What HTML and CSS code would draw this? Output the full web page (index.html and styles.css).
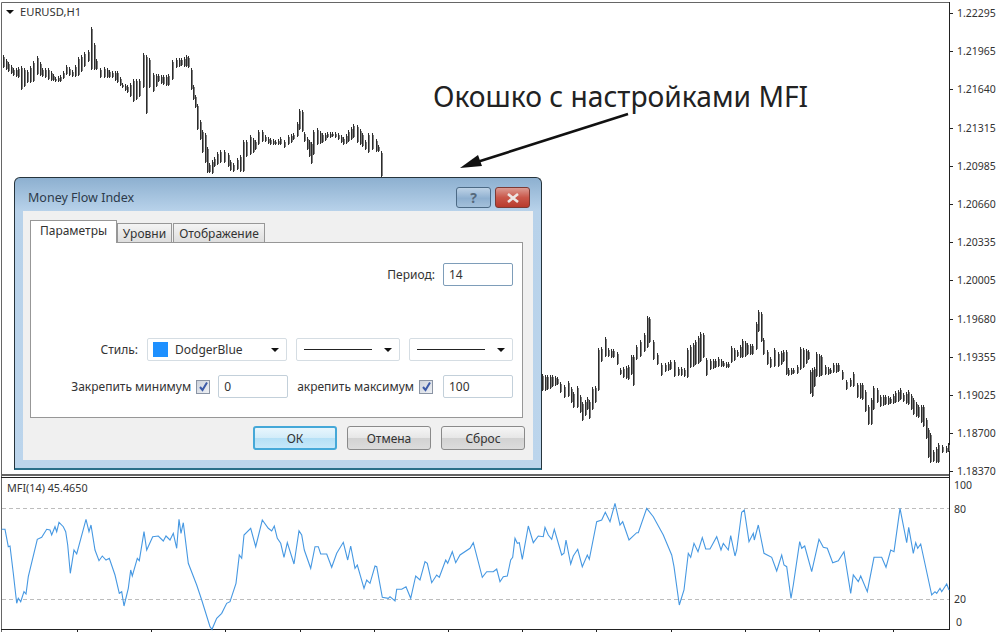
FILE: index.html
```html
<!DOCTYPE html>
<html lang="ru">

<head>
  <meta charset="UTF-8">
  <title>EURUSD,H1 - Money Flow Index</title>
  <link rel="stylesheet" href="styles.css">
</head>

<body>
  <div class="terminal">
    <svg class="chart-canvas" width="1000" height="632" viewBox="0 0 1000 632">
      <path id="frame-lines" class="frame-lines" d=""></path>
      <path id="grid-lines" class="grid-lines" d=""></path>
      <path id="level-lines" class="level-lines" d=""></path>
      <path id="bars-gray" class="bars-gray" d=""></path>
      <path id="bars-black" class="bars-black" d=""></path>
      <path id="mfi-line" class="mfi-line" d=""></path>
      <path class="note-arrow-line" d="M628 114L474 163"></path>
      <path class="note-arrow-head" d="M460 168L478 155L482 166Z"></path>
    </svg>

    <div class="pane pane-main">
      <div class="pane-title"><span class="title-marker"></span>EURUSD,H1</div>
    </div>
    <div class="axis axis-main">
      <span>1.22295</span>
      <span>1.21965</span>
      <span>1.21640</span>
      <span>1.21315</span>
      <span>1.20985</span>
      <span>1.20660</span>
      <span>1.20335</span>
      <span>1.20005</span>
      <span>1.19680</span>
      <span>1.19355</span>
      <span>1.19025</span>
      <span>1.18700</span>
      <span>1.18370</span>
    </div>
    <div class="pane pane-sub">
      <div class="pane-title sub-title">MFI(14) 45.4650</div>
    </div>
    <div class="axis axis-sub">
      <span>100</span>
      <span class="lvl-80">80</span>
      <span class="lvl-20">20</span>
      <span class="lvl-0">0</span>
    </div>

    <div class="note">Окошко с настройками MFI</div>

    <div class="dialog">
      <div class="dialog-head">
        <span class="dialog-title">Money Flow Index</span>
        <div class="head-buttons">
          <span class="head-btn help-btn">?</span>
          <span class="head-btn close-btn">
            <svg width="14" height="10" viewBox="0 0 14 10">
              <path d="M2 1L12 9M12 1L2 9" fill="none" stroke="#ece6e4" stroke-width="2.6"></path>
            </svg>
          </span>
        </div>
      </div>

      <div class="dialog-body">
        <div class="tabs">
          <span class="tab tab-active">Параметры</span>
          <span class="tab tab-levels">Уровни</span>
          <span class="tab tab-view">Отображение</span>
        </div>

        <div class="tab-panel">
          <div class="form-row row-period">
            <label>Период:</label>
            <div class="field field-num">14</div>
          </div>

          <div class="form-row row-style">
            <label>Стиль:</label>
            <div class="field select select-color">
              <span class="swatch"></span>DodgerBlue<span class="caret"></span>
            </div>
            <div class="field select select-line"><span class="line-sample"></span><span class="caret"></span></div>
            <div class="field select select-line"><span class="line-sample"></span><span class="caret"></span></div>
          </div>

          <div class="form-row row-fix">
            <label>Закрепить минимум</label>
            <span class="check">
              <svg width="11" height="11" viewBox="0 0 11 11">
                <path d="M2 6L4.5 9L9 1.5" fill="none" stroke="#3b5aa8" stroke-width="2"></path>
              </svg>
            </span>
            <div class="field field-num field-min">0</div>
            <label class="label-max">акрепить максимум</label>
            <span class="check">
              <svg width="11" height="11" viewBox="0 0 11 11">
                <path d="M2 6L4.5 9L9 1.5" fill="none" stroke="#3b5aa8" stroke-width="2"></path>
              </svg>
            </span>
            <div class="field field-num field-max">100</div>
          </div>
        </div>

        <div class="dialog-actions">
          <button class="btn btn-default">ОК</button>
          <button class="btn">Отмена</button>
          <button class="btn">Сброс</button>
        </div>
      </div>
    </div>
  </div>

  <script src="chart.js"></script>
</body>

</html>
```

FILE: styles.css
```css
body {
  margin: 0;
  background-color: white;
  font-family: "Noto Sans", Tahoma, sans-serif;
  color: #333;
}

.terminal {
  position: relative;
  width: 1000px;
  height: 632px;
  overflow: hidden;
  display: grid;
  grid-template-columns: 950px 50px;
  grid-template-rows: 477px 155px;
}

.chart-canvas {
  position: absolute;
  left: 0;
  top: 0;
}

.bars-black {
  fill: none;
  stroke: #2c2c2c;
  stroke-width: 1;
}

.bars-gray {
  fill: none;
  stroke: #808080;
  stroke-width: 1;
}

.mfi-line {
  fill: none;
  stroke: #4698e2;
  stroke-width: 1.1;
}

.level-lines {
  fill: none;
  stroke: #bdbdbd;
  stroke-width: 1;
  stroke-dasharray: 4 3;
}

.grid-lines {
  fill: none;
  stroke: #222;
  stroke-width: 1;
}

.frame-lines {
  fill: none;
  stroke: #666;
  stroke-width: 1;
}

.note-arrow-line {
  fill: none;
  stroke: #111;
  stroke-width: 2.6;
}

.note-arrow-head {
  fill: #111;
}

.pane {
  position: relative;
}

.pane-title {
  display: flex;
  align-items: center;
  font-size: 11.2px;
  line-height: 14px;
  padding: 5px 0 0 20px;
}

.title-marker {
  position: absolute;
  left: 6px;
  top: 10px;
  border-left: 4px solid transparent;
  border-right: 4px solid transparent;
  border-top: 4px solid #111;
}

.sub-title {
  font-size: 10.8px;
  padding: 4px 0 0 7px;
}

.axis {
  position: relative;
  display: flex;
  flex-direction: column;
  font-size: 10.5px;
  line-height: 14px;
}

.axis-main {
  padding: 6px 0 0 7px;
}

.axis-main span {
  flex: none;
  height: 38.2px;
}

.axis-sub {
  padding: 1px 0 0 4px;
}

.axis-sub .lvl-80 {
  margin-top: 10px;
}

.axis-sub .lvl-20 {
  margin-top: 76px;
}

.axis-sub .lvl-0 {
  margin-top: 9px;
  padding-left: 2px;
}

.note {
  position: absolute;
  left: 433px;
  top: 76px;
  font-size: 28.2px;
  line-height: 40px;
  color: #222;
  white-space: nowrap;
}

/* settings window */
.dialog {
  position: absolute;
  left: 14px;
  top: 177px;
  width: 526px;
  height: 290px;
  border: 1px solid #26343c;
  border-bottom: 2px solid #2a6f8a;
  border-radius: 6px 6px 0 0;
  background: linear-gradient(to bottom, #8db0d0 0, #b8d2ea 33px, #bcd5ec 100%);
  display: flex;
  flex-direction: column;
  font-size: 12px;
  color: #333;
}

.dialog-head {
  height: 33px;
  display: flex;
  justify-content: space-between;
  align-items: flex-start;
  padding: 0 11px 0 13px;
}

.dialog-title {
  font-size: 12.5px;
  line-height: 40px;
  color: #2c3a4a;
}

.head-buttons {
  display: flex;
  gap: 4px;
  padding-top: 9px;
}

.head-btn {
  width: 33px;
  height: 19px;
  border: 1px solid #4c6a85;
  border-radius: 3px;
  display: flex;
  align-items: center;
  justify-content: center;
}

.help-btn {
  background: linear-gradient(to bottom, #bdd2e6, #8fb0d0 55%, #a3c0da);
  font-weight: bold;
  font-size: 14px;
  color: #56697c;
}

.close-btn {
  border-color: #7c3a34;
  background: linear-gradient(to bottom, #dc9b92, #c9574a 50%, #b83a2c);
}

.dialog-body {
  flex: 1;
  margin: 0 8px 8px 8px;
  background-color: #f0f0f0;
  padding: 9px 10px 0 7px;
  display: flex;
  flex-direction: column;
}

.tabs {
  display: flex;
  align-items: flex-end;
  height: 22px;
  position: relative;
  z-index: 1;
}

.tab {
  height: 19px;
  line-height: 19px;
  text-align: center;
  border: 1px solid #979797;
  border-bottom: none;
  background: linear-gradient(to bottom, #f4f4f4, #dedede);
  box-sizing: border-box;
}

.tab-active {
  width: 87px;
  height: 23px;
  line-height: 20px;
  background: white;
  margin-bottom: -1px;
}

.tab-levels {
  width: 55px;
}

.tab-view {
  width: 92px;
  margin-left: 1px;
}

.tab-panel {
  height: 174px;
  border: 1px solid #979797;
  background-color: white;
  padding: 0 9px 0 0;
  display: flex;
  flex-direction: column;
}

.form-row {
  display: flex;
  align-items: center;
  justify-content: flex-end;
}

.form-row label {
  white-space: nowrap;
}

.row-period {
  margin-top: 20px;
  gap: 8px;
}

.row-style {
  margin-top: 52px;
}

.row-style label {
  margin-right: 9px;
}

.row-fix {
  margin-top: 14px;
}

.field {
  height: 23px;
  box-sizing: border-box;
  border: 1px solid #d5dde3;
  border-radius: 2px;
  background-color: white;
  display: flex;
  align-items: center;
  padding-left: 5px;
}

.field-num {
  width: 70px;
  border-color: #c3d0da;
}

.row-period .field-num {
  border-color: #7e9db9;
}

.field-min {
  margin-left: 8px;
}

.field-max {
  margin-left: 10px;
}

.select {
  position: relative;
  justify-content: flex-start;
}

.select-color {
  width: 140px;
}

.select-line {
  width: 104px;
  margin-left: 9px;
  padding-left: 7px;
}

.swatch {
  width: 15px;
  height: 15px;
  background-color: #1e90ff;
  margin-right: 7px;
}

.line-sample {
  width: 68px;
  height: 1px;
  background-color: #222;
}

.caret {
  margin-left: auto;
  margin-right: 7px;
  border-left: 4px solid transparent;
  border-right: 4px solid transparent;
  border-top: 4px solid #111;
}

.check {
  width: 14px;
  height: 14px;
  box-sizing: border-box;
  border: 1px solid #8a94a4;
  background: linear-gradient(135deg, #cdd3dc, #eef0f4);
  margin-left: 5px;
  display: flex;
  align-items: center;
  justify-content: center;
}

.label-max {
  margin-left: 9px;
}

.dialog-actions {
  display: flex;
  justify-content: flex-end;
  gap: 10px;
  margin-top: 8px;
  margin-right: -2px;
}

.btn {
  width: 84px;
  height: 24px;
  padding: 0;
  font-family: inherit;
  font-size: 12px;
  color: #333;
  border: 1px solid #8a8a8a;
  border-radius: 3px;
  background: linear-gradient(to bottom, #f6f6f6 0, #e6e6e6 50%, #d2d2d2 52%, #dcdcdc 100%);
}

.btn-default {
  border: 2px solid #45a8d8;
  background: linear-gradient(to bottom, #e8f6fd 0, #d2ecf9 50%, #b5e0f6 52%, #c6e8fa 100%);
}
```

FILE: chart.js
```js
// traced price bars: [x, high, low]
const priceBars = [
  [3,55,68],[8,62,72],[13,68,76],[18,67,78],[21,66,90],[27,70,83],[33,61,82],[37,56,75],[42,68,77],[48,68,80],
  [55,77,82],[60,75,82],[66,65,75],[72,70,77],[78,57,76],[84,52,67],[88,50,62],[91,27,70],[96,59,70],[100,68,78],
  [104,67,78],[112,71,78],[117,71,83],[122,83,88],[127,85,93],[133,79,102],[139,79,97],[143,53,88],[146,55,114],
  [149,58,88],[153,73,92],[158,74,82],[163,75,85],[168,74,86],[172,60,80],[176,58,68],[181,58,66],[186,55,67],
  [188,56,68],[191,68,90],[193,85,100],[195,95,108],[197,104,130],[200,120,140],[202,130,153],[205,133,163],
  [207,147,173],[209,163,173],[212,160,174],[214,157,167],[217,152,165],[220,150,163],[224,150,163],[228,153,167],
  [230,160,171],[233,163,172],[237,158,170],[240,155,172],[243,140,172],[246,140,157],[250,135,155],[255,140,150],
  [258,130,145],[262,130,142],[265,135,142],[270,138,145],[275,140,145],[280,137,145],[284,140,148],[288,135,145],
  [293,133,140],[297,122,137],[299,109,130],[302,110,132],[304,132,142],[307,137,150],[309,140,157],[311,142,164],
  [313,130,155],[317,128,145],[322,133,143],[327,132,138],[332,132,137],[338,133,140],[343,137,145],[348,130,142],
  [353,124,138],[357,125,143],[362,133,147],[365,140,150],[368,133,153],[372,133,150],[376,139,152],[378,145,152],
  [381,151,177],
  [542,374,391],[547,375,390],[552,375,387],[557,377,385],[560,382,393],[564,385,398],[568,381,397],[573,392,408],
  [577,386,408],[580,395,413],[582,402,421],[587,397,410],[589,400,419],[592,387,410],[595,386,403],[598,348,391],
  [601,347,362],[605,337,357],[608,348,357],[613,349,358],[617,352,365],[620,368,375],[623,367,378],[628,365,380],
  [631,355,375],[633,355,386],[636,345,360],[640,340,357],[644,333,352],[647,316,348],[649,317,343],[653,340,360],
  [657,353,365],[661,363,376],[665,363,372],[670,360,370],[674,360,377],[678,367,376],[684,368,377],[687,348,378],
  [690,345,368],[695,340,365],[700,332,362],[703,333,358],[706,358,376],[710,359,370],[715,359,368],[718,357,367],
  [723,361,367],[728,362,368],[731,346,363],[737,350,357],[742,339,358],[747,343,355],[752,344,355],[756,322,350],
  [758,310,332],[761,312,342],[763,338,355],[767,350,365],[770,357,368],[774,348,367],[778,352,367],[783,350,362],
  [786,350,375],[788,368,376],[793,368,374],[797,365,374],[800,347,370],[803,348,368],[808,350,360],[810,370,394],
  [812,368,397],[814,367,387],[816,352,377],[821,355,376],[825,365,375],[830,368,374],[833,363,373],[838,363,372],
  [842,370,380],[846,380,390],[850,378,387],[853,372,387],[857,383,398],[862,383,400],[865,390,412],[868,405,425],
  [871,398,425],[873,386,410],[877,388,403],[880,395,407],[885,395,405],[890,397,404],[895,391,403],[900,388,400],
  [903,393,402],[908,390,405],[913,398,415],[918,405,418],[923,405,427],[926,418,439],[928,428,458],[930,433,463],
  [933,450,462],[938,443,463],[942,445,453],[946,446,453],[948,443,452]
];

// MFI line, in 3x crop coordinates of the sub window
const mfiLeft = [
  5,178,15,178,25,230,30,228,40,310,50,400,55,385,62,395,72,365,78,372,85,320,112,208,125,202,140,178,150,180,155,195,
  165,170,170,185,177,157,190,170,197,185,203,225,211,310,222,240,230,252,258,148,267,185,273,165,285,240,297,272,
  307,258,318,270,328,265,345,315,358,370,365,365,372,408,385,355,392,300,397,318,412,265,418,272,432,185,440,240,
  458,200,475,198,490,213,498,198,510,210,520,190,530,235,537,148,543,190,550,158,565,280,590,345,605,390,630,470,
  636,478,650,445,665,430,680,400,690,395,708,340,718,255,725,265,732,195,752,175,767,230,787,150,805,175,815,183,
  823,168,832,205,842,220,852,262,862,218,882,282,897,182,905,195,913,240,932,295,945,230,955,230,962,252,980,252,
  995,292,1010,250,1030,217,1043,270,1052,228,1065,295,1072,285,1092,355,1100,330,1110,340,1125,288,1130,290,
  1147,382,1165,385,1170,380,1185,393,1190,358,1205,358,1218,350,1232,385,1247,318,1260,330,1275,275,1282,280,
  1295,338,1310,315,1318,322,1337,270,1343,280,1357,245,1367,278,1380,255,1410,235,1420,218,1447,322,1460,305,
  1480,305,1490,297,1500,335
];
const mfiRight = [
  0,335,10,320,22,318,32,270,38,262,45,205,52,220,58,218,67,268,85,168,100,218,115,198,130,200,135,172,145,195,155,208,
  163,178,185,255,192,250,198,210,212,282,220,258,233,238,247,290,262,255,268,268,290,155,305,150,316,127,330,155,
  345,100,360,165,368,155,387,210,410,188,415,188,440,115,460,140,490,195,515,255,522,290,538,405,552,360,565,250,
  572,262,582,220,594,245,607,203,617,237,630,237,650,200,663,240,670,220,685,240,692,197,705,258,710,240,725,127,
  733,120,747,215,760,190,763,210,775,165,792,250,815,262,830,303,845,255,852,285,860,290,873,385,880,345,899,215,
  905,235,914,228,935,305,957,208,970,232,982,235,998,278,1015,272,1032,245,1052,370,1060,315,1075,335,1082,318,
  1102,365,1122,262,1145,262,1158,292,1172,240,1182,245,1200,115,1220,218,1226,172,1240,250,1247,218,1253,235,
  1262,222,1295,375,1305,365,1310,370,1320,355,1325,365,1340,342,1347,360
];

function buildBars() {
  let black = '';
  let gray = '';
  priceBars.forEach(function (bar, i) {
    const next = priceBars[i + 1];
    addBar(bar[0], bar[1], bar[2]);
    if (!next || next[0] - bar[0] > 100) return;
    // fill the gap between traced bars
    for (let x = bar[0] + 2.5; x < next[0] - 1.5; x += 2.5) {
      const t = (x - bar[0]) / (next[0] - bar[0]);
      addBar(x, bar[1] + (next[1] - bar[1]) * t, bar[2] + (next[2] - bar[2]) * t);
    }
  });

  function addBar(x, high, low) {
    const px = Math.round(x) + 0.5;
    black += `M${px} ${Math.round(high)}V${Math.round(low)}`;
    gray += `M${px + 1} ${Math.round(high) + 2}V${Math.round(low) - 1}`;
  }

  document.getElementById('bars-black').setAttribute('d', black);
  document.getElementById('bars-gray').setAttribute('d', gray);
}

function buildMfi() {
  let d = '';
  function addPoints(points, left) {
    for (let i = 0; i < points.length; i += 2) {
      const x = (left + points[i] / 3).toFixed(1);
      const y = (470 + points[i + 1] / 3).toFixed(1);
      d += `${d ? 'L' : 'M'}${x} ${y}`;
    }
  }
  addPoints(mfiLeft, 0);
  addPoints(mfiRight, 500);
  document.getElementById('mfi-line').setAttribute('d', d);
}

function buildGrid() {
  // window frame, gray on the top and left, dark on the axis side
  document.getElementById('frame-lines').setAttribute('d', 'M1.5 632V2.5H949.5M1 474.5H949M1 475.5H949');
  let d = 'M949.5 2V630M1 629.5H950M1 477.5H950';
  // price ticks
  for (let i = 0; i < 13; i++) {
    const y = Math.round(13 + i * 38.2) + 0.5;
    d += `M949 ${y}H953`;
  }
  // time ticks
  for (let x = 77; x < 949; x += 74.2) {
    d += `M${Math.round(x) + 0.5} 629V632`;
  }
  document.getElementById('grid-lines').setAttribute('d', d);
  document.getElementById('level-lines').setAttribute('d', 'M2 508.5H949M2 599.5H949');
}

buildGrid();
buildBars();
buildMfi();
```
